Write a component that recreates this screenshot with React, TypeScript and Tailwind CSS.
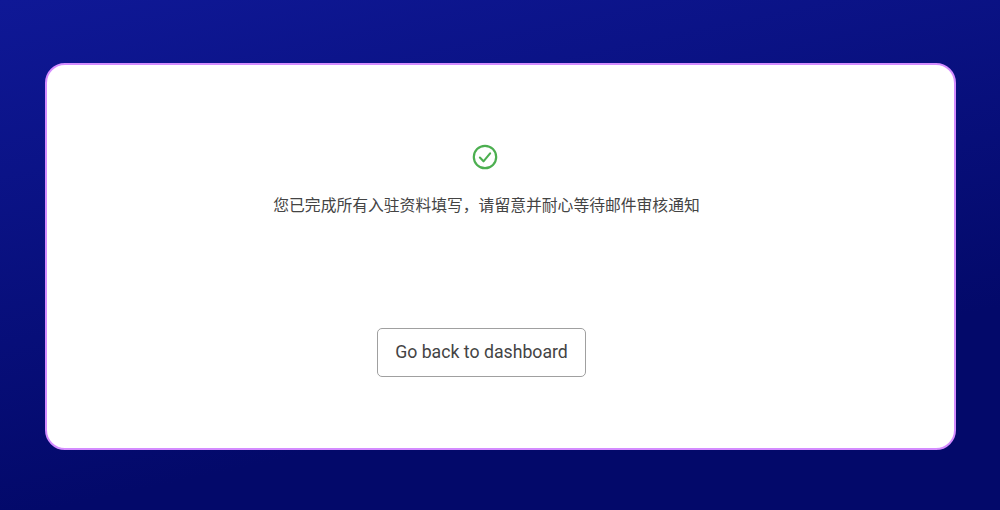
// App.tsx
import type { FC } from 'react';

const CheckIcon: FC = () => (
  <svg width="26" height="26" viewBox="0 0 26 26" fill="none" aria-hidden="true">
    <circle cx="13" cy="13" r="11.2" stroke="#4caf50" strokeWidth="2.2" />
    <path d="M7.9 13.6l3.6 3.7 6.6-8" stroke="#4caf50" strokeWidth="2.1" strokeLinecap="round" strokeLinejoin="round" />
  </svg>
);

const App: FC = () => {
  return (
    <div className="h-[510px] w-[1000px] overflow-hidden bg-[linear-gradient(168deg,#0f1896_0%,#03096a_72%,#03096a_100%)] pl-[45px] pt-[63px] font-['Roboto','Noto_Sans_CJK_SC',sans-serif]">
      {/* White card */}
      <div className="flex h-[387px] w-[911px] flex-col items-center rounded-[20px] border-2 border-[#d48cff] bg-white pr-[28px] pt-[79px]">
        <div className="mr-[4px]">
          <CheckIcon />
        </div>
        <p className="mt-[24px] text-[15.8px] leading-[24px] text-[#444444]">
          您已完成所有入驻资料填写，请留意并耐心等待邮件审核通知
        </p>
        <button className="mr-[10px] mt-[110px] h-[49px] w-[209px] rounded-[5px] border-[1.5px] border-[#a0a0a0] bg-white text-[17.7px] text-[#444444]">
          Go back to dashboard
        </button>
      </div>
    </div>
  );
};

export default App;
